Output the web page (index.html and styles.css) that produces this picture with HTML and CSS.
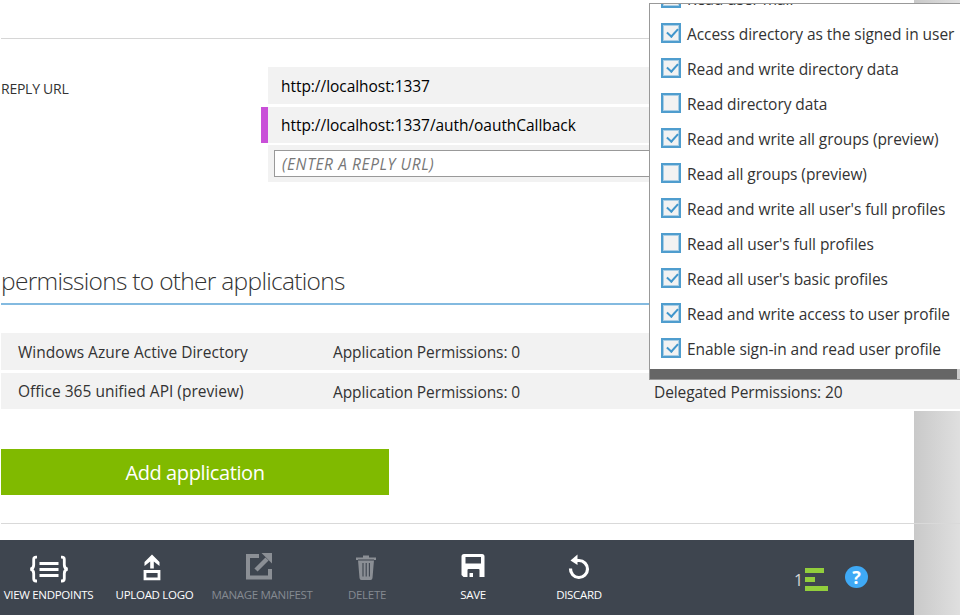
FILE: index.html
```html
<!DOCTYPE html>
<html lang="en">
<head>
<meta charset="utf-8">
<title>Configure application</title>
<link rel="stylesheet" href="styles.css">
</head>
<body>
<div class="page">
  <main class="content">
    <section class="reply">
      <h3 class="reply-label">REPLY URL</h3>
      <div class="urls">
        <div class="url">http://localhost:1337</div>
        <div class="url changed">http://localhost:1337/auth/oauthCallback</div>
        <div class="url entry"><input class="url-input" type="text" placeholder="(ENTER A REPLY URL)"></div>
      </div>
    </section>
    <h2 class="section-title"><span>permissions to other applications</span></h2>
    <div class="apps">
      <div class="app"><span class="name">Windows Azure Active Directory</span><span class="perm">Application Permissions: 0</span></div>
      <div class="app second"><span class="name">Office 365 unified API (preview)</span><span class="perm">Application Permissions: 0</span><span class="perm">Delegated Permissions: 20</span></div>
    </div>
    <button class="add">Add application</button>
    <div class="rule"></div>
  </main>
  <footer class="bar">
    <div class="cmd c1">
      <svg width="40" height="28" viewBox="0 0 40 28" fill="none" stroke="#fff"><path d="M8 2.200H7Q4.700 2.200 4.700 4.500V10Q4.700 13.400 1.500 14.200Q4.700 15 4.700 18.500V23.500Q4.700 26 7 26H8M32 2.200H33Q35.300 2.200 35.300 4.500V10Q35.300 13.400 38.500 14.200Q35.300 15 35.300 18.500V23.500Q35.300 26 33 26H32" stroke-width="2.800"/><path d="M10.500 8.500H29.500M10.500 14.500H29.500M10.500 20.500H29.500" stroke-width="3"/></svg>
      <span>VIEW ENDPOINTS</span>
    </div>
    <div class="cmd c2">
      <svg width="18" height="28" viewBox="0 0 18 28" fill="#fff"><path d="M9 0.500L16.500 8V12L10.800 7.500V14.500H7.200V7.500L1.500 12V8Z"/><path d="M2 17.500H16V24.800H2Z" fill="none" stroke="#fff" stroke-width="2.800"/></svg>
      <span>UPLOAD LOGO</span>
    </div>
    <div class="cmd c3 off">
      <svg width="28" height="28" viewBox="0 0 28 28" fill="none" stroke="#8b8f95"><path d="M14 3H3V24.500H25V16" stroke-width="4"/><path d="M11 17L22 6" stroke-width="4.500"/><path d="M16.500 0H27V10.500Z" fill="#8b8f95" stroke="none"/></svg>
      <span>MANAGE MANIFEST</span>
    </div>
    <div class="cmd c4 off">
      <svg width="22" height="28" viewBox="0 0 22 28"><path d="M8 1.500H14V3.500H21V6H19L17.500 24Q17.300 26 15.500 26H6.500Q4.700 26 4.500 24L3 6H1V3.500H8Z" fill="#8b8f95"/><path d="M3 6H19M8 9V22.500M11.200 9V22.500M14.400 9V22.500" fill="none" stroke="#3e454f" stroke-width="1.100"/></svg>
      <span>DELETE</span>
    </div>
    <div class="cmd c5">
      <svg width="26" height="28" viewBox="0 0 26 28"><path d="M4 1H22Q24.500 1 24.500 3.500V24H19.500V17Q19.500 16 18.500 16H8.500Q7.500 16 7.500 17V24H3.500L1.500 22V3.500Q1.500 1 4 1ZM5.500 4V10.500H21V4Z" fill="#fff" fill-rule="evenodd"/><path d="M9.500 20H13V24H9.500Z" fill="#fff"/></svg>
      <span>SAVE</span>
    </div>
    <div class="cmd c6">
      <svg width="24" height="28" viewBox="0 0 24 28"><path d="M9 6.500H12A8.500 8.500 0 1 1 3.500 14.500" fill="none" stroke="#fff" stroke-width="3.200"/><path d="M10.500 0.500V11L3.500 6.500Z" fill="#fff"/></svg>
      <span>DISCARD</span>
    </div>
    <div class="status"><span>1</span><i class="jobs"><b></b><b></b><b></b></i></div>
    <div class="help">?</div>
  </footer>
</div>
<div class="popup">
  <div class="options">
    <div class="opt"><i class="box"></i><span>Read user mail</span></div>
    <div class="opt on"><i class="box"></i><span>Access directory as the signed in user</span></div>
    <div class="opt on"><i class="box"></i><span>Read and write directory data</span></div>
    <div class="opt"><i class="box"></i><span>Read directory data</span></div>
    <div class="opt on"><i class="box"></i><span>Read and write all groups (preview)</span></div>
    <div class="opt"><i class="box"></i><span>Read all groups (preview)</span></div>
    <div class="opt on"><i class="box"></i><span>Read and write all user's full profiles</span></div>
    <div class="opt"><i class="box"></i><span>Read all user's full profiles</span></div>
    <div class="opt on"><i class="box"></i><span>Read all user's basic profiles</span></div>
    <div class="opt on"><i class="box"></i><span>Read and write access to user profile</span></div>
    <div class="opt on"><i class="box"></i><span>Enable sign-in and read user profile</span></div>
  </div>
  <div class="scroll"><div class="thumb"></div></div>
</div>
</body>
</html>
```
FILE: styles.css
```css
* { box-sizing: border-box; }
body {
  margin: 0;
  width: 960px;
  height: 615px;
  overflow: hidden;
  position: relative;
  font: 15.5px/20px "Open Sans", "Noto Sans", sans-serif;
  color: #333;
}
.page { width: 960px; height: 615px; display: flex; flex-direction: column; background: linear-gradient(90deg, #c9c9c9 914px, #dfdfdf 960px); }
.content { height: 540px; width: 914px; background: #fff; padding: 38px 0 0 1px; }
.reply { display: flex; width: 959px; border-top: 1px solid #d6d6d6; padding-top: 28px; }
.reply-label { margin: 12px 0 0; width: 267px; font-weight: 400; font-size: 14px; letter-spacing: -0.25px; }
.urls { flex: 1; display: grid; grid-template-rows: 37px 36px 36px; row-gap: 3px; color: #000; }
.url { background: #f2f2f2; padding: 9px 13px; letter-spacing: -0.05px; }
.changed { border-left: 7px solid #c94fd8; margin-left: -7px; padding-top: 8px; }
.entry { padding: 5px 0 0 6px; margin-top: -1px; }
.url-input { display: block; width: 390px; height: 27px; border: 1px solid #999; background: #fff; padding: 0 7px; font: italic 15.5px "Open Sans", sans-serif; letter-spacing: 0.6px; }
.url-input::placeholder { color: #777; }
.section-title { margin: 84px 0 0; width: 959px; height: 39px; border-bottom: 2px solid #83bae0; font-weight: 300; font-size: 24.5px; line-height: 29px; letter-spacing: -0.7px; }
.apps { margin-top: 28px; width: 959px; display: grid; grid-template-rows: 37px 36px; row-gap: 3px; background: #fff; padding-bottom: 2px; }
.app { display: grid; grid-template-columns: 315px 321px 1fr; padding: 9px 0 0 17px; background: #f2f2f2; letter-spacing: -0.09px; }
.name { letter-spacing: 0.02px; }
.second { padding-top: 8px; }
.second .perm { padding-top: 1px; }
.add { display: block; margin-top: 38px; width: 388px; height: 46px; border: 0; padding: 0; background: #80ba00; color: #fff; font: 20px "Open Sans", sans-serif; letter-spacing: -0.4px; }
.rule { margin-top: 28px; width: 959px; height: 1px; background: #d9d9d9; }
.bar { width: 914px; height: 75px; background: #3e454f; color: #fff; display: flex; font-size: 11.5px; line-height: 16px; }
.cmd { display: flex; flex-direction: column; align-items: center; padding-top: 13px; white-space: nowrap; flex: none; }
.cmd svg { display: block; margin-bottom: 6px; }
.cmd span { letter-spacing: -0.3px; }
.c1 { width: 97px; padding-top: 15px; }
.c1 svg { margin-bottom: 4px; }
.c2 { width: 115px; padding-top: 14px; }
.c2 svg { margin: 0 5px 5px 0; }
.c3 { width: 100px; }
.c3 svg { margin-right: 7px; }
.c4 { width: 110px; padding-top: 14px; }
.c4 svg { margin: 0 2px 5px 0; }
.c5 { width: 102px; }
.c6 { width: 110px; padding-top: 14px; }
.c6 svg { margin-bottom: 5px; }
.off { color: #858a91; }
.status { display: flex; margin-left: 160px; padding-top: 28px; font-size: 16px; line-height: 24px; color: #d7d7d7; }
.jobs { display: flex; flex-direction: column; gap: 4px; margin-left: 2px; }
.jobs b { height: 5px; width: 19px; background: #92ce3c; }
.jobs b:nth-child(2) { width: 10px; }
.jobs b:nth-child(3) { width: 23px; }
.help { margin: 26px 0 0 17px; width: 23px; height: 22px; border-radius: 50%; background: #3fa9f5; text-align: center; font: bold 18px/22px "Open Sans", sans-serif; }
.popup { position: absolute; left: 649px; top: 3px; width: 320px; height: 377px; border: 1px solid #999; background: #fff; display: flex; flex-direction: column; }
.options { height: 365px; overflow: hidden; padding-left: 11px; display: flex; flex-direction: column; justify-content: flex-end; }
.opt { display: flex; flex: none; height: 35px; padding-top: 4px; white-space: nowrap; letter-spacing: -0.06px; }
.opt span { margin: 1px 0 0 6px; }
.box { width: 20px; height: 20px; border: 2px solid #4f9dce; background: #f2f2f2; position: relative; box-shadow: inset 0 0 0 1px #a9cde4; }
.on .box::after { content: ""; position: absolute; left: 6px; top: 1px; width: 5px; height: 9px; border: solid #4196cc; border-width: 0 2px 2px 0; transform: rotate(42deg); }
.scroll { height: 10px; background: #ccc; }
.thumb { width: 307px; height: 10px; background: #666; }
```
